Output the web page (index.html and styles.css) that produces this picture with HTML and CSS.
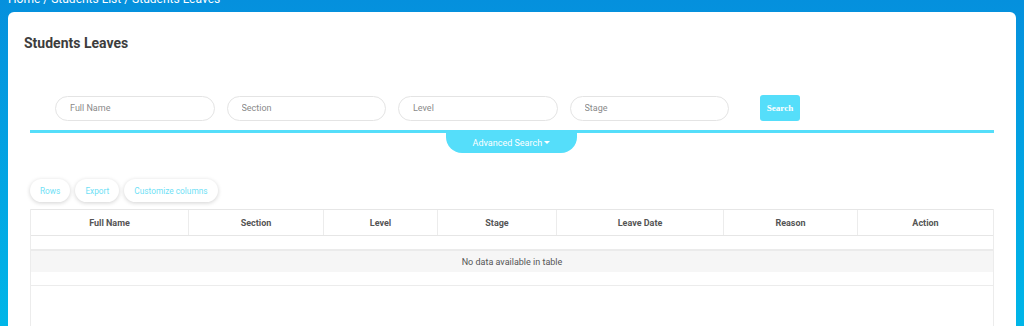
FILE: index.html
```html
<!DOCTYPE html>
<html>
    <head>
        <title>Students Leaves</title>
        <link rel="stylesheet" href="styles.css">
    </head>
    <body>
        <div class="crumbs">Home / Students List / Students Leaves</div>
        <div class="card">
            <h2 class="title">Students Leaves</h2>
            <form class="search">
                <div class="search-row">
                    <input type="text" class="field" placeholder="Full Name">
                    <input type="text" class="field" placeholder="Section">
                    <input type="text" class="field" placeholder="Level">
                    <input type="text" class="field" placeholder="Stage">
                    <button type="button" class="search-btn">Search</button>
                </div>
                <div class="search-line"></div>
                <div class="adv-wrap">
                    <button type="button" class="adv-btn">Advanced Search <span class="caret"></span></button>
                </div>
            </form>
            <div class="tools">
                <button type="button" class="tool">Rows</button>
                <button type="button" class="tool">Export</button>
                <button type="button" class="tool">Customize columns</button>
            </div>
            <div class="table-wrap">
                <table class="grid">
                    <thead>
                        <tr>
                            <th class="c1">Full Name</th>
                            <th class="c2">Section</th>
                            <th class="c3">Level</th>
                            <th class="c4">Stage</th>
                            <th class="c5">Leave Date</th>
                            <th class="c6">Reason</th>
                            <th class="c7">Action</th>
                        </tr>
                    </thead>
                    <tbody>
                        <tr class="spacer"><td colspan="7"></td></tr>
                        <tr class="empty"><td colspan="7">No data available in table</td></tr>
                        <tr class="spacer2"><td colspan="7"></td></tr>
                    </tbody>
                </table>
            </div>
        </div>
    </body>
</html>
```

FILE: styles.css
```css
body {
    margin: 0;
    height: 326px;
    overflow: hidden;
    background: linear-gradient(#0590dd, #00b6e8);
    font-family: Roboto, "Liberation Sans", sans-serif;
}
.crumbs {
    height: 12px;
    padding-left: 8px;
    color: #ffffff;
    font-size: 12px;
    line-height: 12px;
    margin-top: -7px;
    margin-bottom: 7px;
}
.card {
    margin: 0 8px;
    background: #ffffff;
    border-radius: 6px;
    padding: 23px 22px 0 22px;
    height: 400px;
}
.title {
    margin: 0 0 0 -6px;
    font-size: 14px;
    line-height: 16px;
    font-weight: bold;
    color: #3d3d3d;
}
.search {
    margin-top: 44px;
}
.search-row {
    display: flex;
    align-items: center;
    padding-left: 25px;
    gap: 12px;
}
.field {
    width: 159.5px;
    height: 25px;
    box-sizing: border-box;
    border: 1px solid #e4e4e4;
    border-radius: 13px;
    padding: 0 14px;
    font-family: Roboto, sans-serif;
    font-size: 9px;
    color: #555;
    outline: none;
}
.field::placeholder {
    color: #8a8a8a;
}
.search-btn {
    margin-left: 19px;
    width: 40px;
    height: 26px;
    border: none;
    border-radius: 3px;
    background: #55defa;
    color: #ffffff;
    font-family: "Liberation Serif", serif;
    font-weight: bold;
    font-size: 9px;
    padding: 0;
}
.search-line {
    margin-top: 9px;
    height: 3px;
    background: #55defa;
}
.adv-wrap {
    display: flex;
    justify-content: center;
}
.adv-btn {
    width: 131px;
    height: 20px;
    border: none;
    border-radius: 0 0 16px 16px;
    background: #55defa;
    color: #ffffff;
    font-family: Roboto, sans-serif;
    font-size: 9px;
    padding: 0;
    margin-right: 1px;
}
.caret {
    display: inline-block;
    width: 0;
    height: 0;
    border-left: 3px solid transparent;
    border-right: 3px solid transparent;
    border-top: 3px solid #ffffff;
    vertical-align: 2px;
}
.tools {
    display: flex;
    gap: 5px;
    margin-top: 26px;
}
.tool {
    height: 23px;
    border: none;
    border-radius: 12px;
    background: #ffffff;
    box-shadow: 0 1px 4px rgba(0, 0, 0, 0.18);
    color: #6fdff6;
    font-family: Roboto, sans-serif;
    font-size: 8.3px;
    padding: 0 10px;
}
.table-wrap {
    margin-top: 7px;
    border-left: 1px solid #ececec;
    border-right: 1px solid #ececec;
    height: 200px;
}
.grid {
    width: 100%;
    border-collapse: collapse;
    table-layout: fixed;
}
.grid th {
    height: 25px;
    border-top: 1px solid #e6e6e6;
    border-bottom: 1px solid #e6e6e6;
    border-left: 1px solid #ececec;
    font-size: 9px;
    font-weight: bold;
    color: #555;
    padding: 0;
}
.grid th:first-child {
    border-left: none;
}
.c1 { width: 157px; }
.c2 { width: 134px; }
.c3 { width: 113px; }
.c4 { width: 118px; }
.c5 { width: 166px; }
.c6 { width: 133px; }
.spacer td {
    height: 13px;
    padding: 0;
    border-bottom: 2px solid #ebebeb;
}
.empty td {
    height: 21px;
    padding: 0;
    background: #f6f6f6;
    text-align: center;
    font-size: 9px;
    color: #555;
}
.spacer2 td {
    height: 13px;
    padding: 0;
    border-bottom: 1px solid #ececec;
}
```
